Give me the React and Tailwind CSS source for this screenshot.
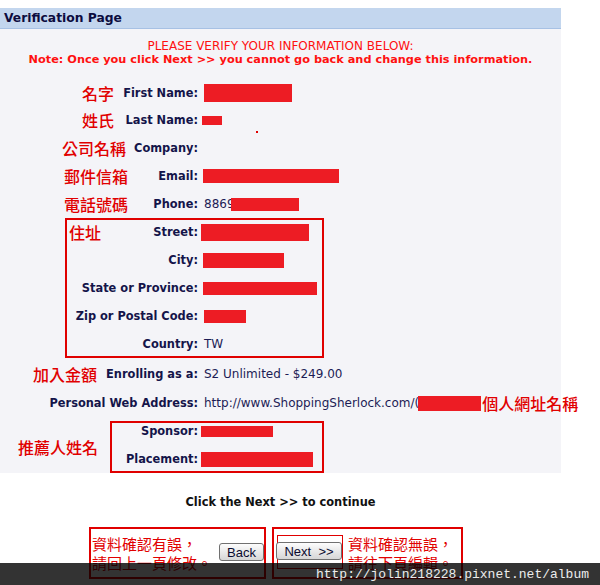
const CJK = "font-['Noto_Sans_CJK_TC',sans-serif] text-[#e10000] whitespace-nowrap";
const NOTE = `${CJK} text-[16px] leading-none font-medium`;
const BOTTOM = `${CJK} text-[15px] leading-[19px]`;
const LABEL = "font-bold text-[#14144a] whitespace-nowrap";
const VAL = "text-[12px] text-[#1c1c55] whitespace-nowrap";
const BAR = "bg-[#ed1c24] shrink-0";
const BTN = "h-[18px] border border-[#707070] rounded-[3px] bg-linear-to-b from-[#fdfdfd] to-[#d6d6d6] font-['Liberation_Sans',sans-serif] text-[13px] leading-none text-[#0a0a30] flex items-center justify-center shrink-0";

function Row({ className = "h-[28px]", cell = "w-[198px]", note, label, children }) {
  return (
    <div className={`flex items-center ${className}`}>
      <div className={`flex items-center shrink-0 ${cell}`}>
        {note}
        <span className={`ml-auto ${LABEL}`}>{label}</span>
      </div>
      <div className="flex items-center pl-[6px]">{children}</div>
    </div>
  );
}

export default function App() {
  return (
    <div className="relative w-[600px] h-[585px] overflow-hidden bg-white pt-[8px] font-['DejaVu_Sans',sans-serif] text-[11.4px] leading-[13px]">
      <div className="w-[561px] bg-[#f4f4f8]">
        <div className="h-[21px] flex items-center px-[4px] bg-[#c3d6ee] border-b border-[#a7c1e4] font-bold text-[12.3px] text-[#0c0c3e]">
          Verification Page
        </div>

        <div className="pt-[11px] text-center text-[#ff1010]">
          <div className="text-[12px]">PLEASE VERIFY YOUR INFORMATION BELOW:</div>
          <div className="font-bold text-[11.3px]">Note: Once you click Next &gt;&gt; you cannot go back and change this information.</div>
        </div>

        <div className="mt-[14px]">
          <Row className="h-[26px]" label="First Name:" note={<span className={`ml-[82px] ${NOTE}`}>名字</span>}>
            <span className={`${BAR} w-[88px] h-[18px]`} />
          </Row>
          <Row label="Last Name:" note={<span className={`ml-[82px] ${NOTE}`}>姓氏</span>}>
            <span className={`${BAR} -ml-[2px] w-[20px] h-[9px]`} />
            <span className="ml-[34px] self-end translate-y-[8px] w-[2px] h-[2px] bg-[#e00000]" />
          </Row>
          <Row label="Company:" note={<span className={`ml-[62px] ${NOTE}`}>公司名稱</span>} />
          <Row label="Email:" note={<span className={`ml-[64px] ${NOTE}`}>郵件信箱</span>}>
            <span className={`${BAR} -ml-[1px] w-[136px] h-[14px]`} />
          </Row>
          <Row label="Phone:" note={<span className={`ml-[64px] ${NOTE}`}>電話號碼</span>}>
            <span className={VAL}>8869</span>
            <span className={`${BAR} -ml-[4px] w-[68px] h-[13px]`} />
          </Row>

          <div className="ml-[65px] w-[259px] ring-2 ring-inset ring-[#e00000]">
            <Row cell="w-[133px]" label="Street:" note={<span className={`ml-[4px] ${NOTE}`}>住址</span>}>
              <span className={`${BAR} -ml-[3px] w-[108px] h-[17px]`} />
            </Row>
            <Row cell="w-[133px]" label="City:">
              <span className={`${BAR} -ml-[1px] w-[81px] h-[15px]`} />
            </Row>
            <Row cell="w-[133px]" label="State or Province:">
              <span className={`${BAR} -ml-[1px] w-[114px] h-[13px]`} />
            </Row>
            <Row cell="w-[133px]" label="Zip or Postal Code:">
              <span className={`${BAR} w-[42px] h-[13px]`} />
            </Row>
            <Row cell="w-[133px]" label="Country:">
              <span className={VAL}>TW</span>
            </Row>
          </div>

          <Row className="h-[32px]" label="Enrolling as a:" note={<span className={`ml-[33px] ${NOTE}`}>加入金額</span>}>
            <span className={VAL}>S2 Unlimited - $249.00</span>
          </Row>
          <Row className="h-[26px]" label="Personal Web Address:">
            <span className={VAL}>http://www.ShoppingSherlock.com/(</span>
            <span className={`${BAR} -ml-[1px] w-[63px] h-[15px]`} />
            <span className={`ml-[1px] ${NOTE}`}>個人網址名稱</span>
          </Row>

          <div className="flex items-center mt-[5px]">
            <span className={`ml-[18px] w-[92px] shrink-0 ${NOTE}`}>推薦人姓名</span>
            <div className="w-[214px] ring-2 ring-inset ring-[#e00000]">
              <Row className="h-[20px]" cell="w-[88px]" label="Sponsor:">
                <span className={`${BAR} -ml-[3px] w-[72px] h-[11px]`} />
              </Row>
              <Row className="h-[32px] pt-[4px]" cell="w-[88px]" label="Placement:">
                <span className={`${BAR} -ml-[3px] w-[112px] h-[15px]`} />
              </Row>
            </div>
          </div>
        </div>
      </div>

      <div className="w-[561px] mt-[23px] text-center font-bold text-[#111]">
        Click the Next &gt;&gt; to continue
      </div>

      <div className="flex mt-[18px] ml-[89px] gap-[6px]">
        <div className="flex w-[177px] h-[52px] border-2 border-[#e00000]">
          <div className={`w-[127px] ml-[1px] mt-[5px] shrink-0 ${BOTTOM}`}>
            <div>資料確認有誤，</div>
            <div>請回上一頁修改。</div>
          </div>
          <button className={`${BTN} w-[45px] mt-[14px]`}>Back</button>
        </div>
        <div className="flex w-[191px] h-[52px] border-2 border-[#e00000]">
          <div className="ml-[3px] mt-[6px] w-[66px] h-[34px] border border-[#e00000] shrink-0">
            <button className={`${BTN} w-[66px] -ml-[2px] mt-[6px] whitespace-pre`}>Next  &gt;&gt;</button>
          </div>
          <div className={`ml-[5px] mt-[5px] ${BOTTOM}`}>
            <div>資料確認無誤，</div>
            <div>請往下頁編輯。</div>
          </div>
        </div>
      </div>

      <div className="absolute left-0 right-0 top-[563px] h-[22px] bg-black/80 flex items-center justify-end pr-[11px] font-['Liberation_Mono',monospace] text-[13px] text-[#ececec]">
        http://jolin218228.pixnet.net/album
      </div>
    </div>
  );
}
